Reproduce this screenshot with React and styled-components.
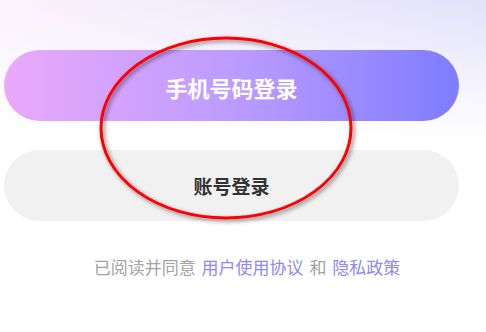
import styled, { createGlobalStyle } from 'styled-components';

const GlobalStyle = createGlobalStyle`
  html, body {
    margin: 0;
    padding: 0;
    background: #fff;
  }
  * {
    box-sizing: border-box;
  }
`;

const Page = styled.div`
  position: relative;
  width: 486px;
  height: 332px;
  overflow: hidden;
  padding: 50px 27px 0 4px;
  display: flex;
  flex-direction: column;
  font-family: "Noto Sans CJK SC", "Noto Sans", sans-serif;
  background:
    linear-gradient(180deg, rgba(255, 255, 255, 0) 0%, #ffffff 42%),
    linear-gradient(90deg, #fbf2fd 0%, #efebfb 50%, #e3e1fa 100%);
`;

const LoginButton = styled.button`
  height: 71px;
  width: 455px;
  border: none;
  border-radius: 36px;
  display: flex;
  align-items: center;
  justify-content: center;
  font-family: inherit;
  font-weight: 700;
  font-size: ${props => (props.$primary ? '22px' : '19px')};
  color: ${props => (props.$primary ? '#ffffff' : '#333333')};
  background: ${props =>
    props.$primary
      ? 'linear-gradient(90deg, #eaa9fb 0%, #bc9cff 50%, #7e7cff 100%)'
      : '#f1f1f1'};
  padding: ${props => (props.$primary ? '3px 0 0' : '0')};
  & + & {
    margin-top: 29px;
  }
`;

const Agreement = styled.p`
  margin: 34px 0 0;
  text-align: center;
  font-size: 17px;
  line-height: 24px;
  word-spacing: 2px;
  color: #a3a3a3;
  padding-left: 31px;
`;

const AgreementLink = styled.span`
  color: #8d87f7;
`;

const Annotation = styled.svg`
  position: absolute;
  left: 96px;
  top: 34px;
  overflow: visible;
  pointer-events: none;
`;

const App = () => (
  <>
    <GlobalStyle />
    <Page>
      <LoginButton $primary>手机号码登录</LoginButton>
      <LoginButton>账号登录</LoginButton>
      <Agreement>
        已阅读并同意 <AgreementLink>用户使用协议</AgreementLink> 和{' '}
        <AgreementLink>隐私政策</AgreementLink>
      </Agreement>
      <Annotation width="264" height="192" viewBox="0 0 264 192">
        <defs>
          <filter id="shadow" x="-10%" y="-10%" width="120%" height="120%">
            <feDropShadow dx="2" dy="2" stdDeviation="2" floodColor="#000" floodOpacity="0.5" />
          </filter>
        </defs>
        <ellipse
          cx="130"
          cy="94"
          rx="125"
          ry="90"
          fill="none"
          stroke="#ff0000"
          strokeWidth="3"
          filter="url(#shadow)"
        />
      </Annotation>
    </Page>
  </>
);

export default App;
